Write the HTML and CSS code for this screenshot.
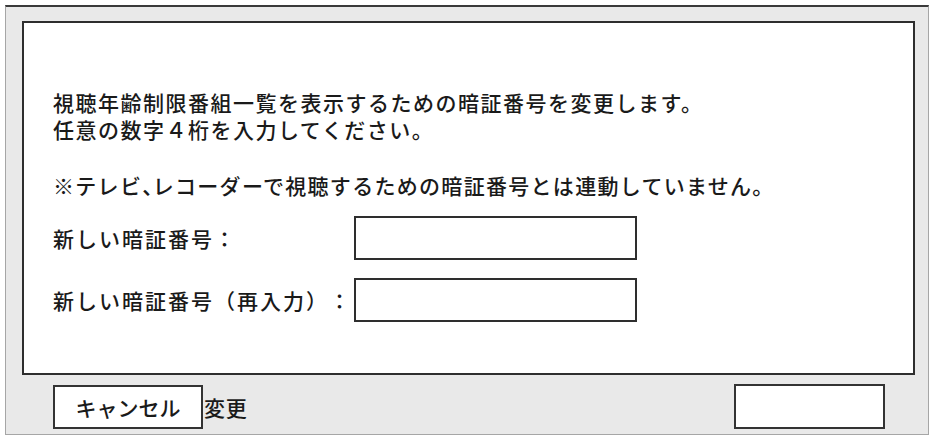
FILE: index.html
```html
<!DOCTYPE html>
<html lang="ja">
<head>
    <meta charset="UTF-8">
    <meta name="viewport" content="width=device-width, initial-scale=1.0">
    <title>暗証番号変更</title>
    <link rel="stylesheet" href="styles.css">
</head>
<body>

    <div class="dialog">
        <form class="panel" id="pin-form">
            <p class="lead">
                視聴年齢制限番組一覧を表示するための暗証番号を変更します。<br>
                任意の数字４桁を入力してください。
            </p>
            <p class="note">※テレビ<span class="comma">、</span>レコーダーで視聴するための暗証番号とは連動していません。</p>

            <div class="field">
                <label for="pin">新しい暗証番号：</label>
                <input type="password" id="pin" maxlength="4" inputmode="numeric">
            </div>
            <div class="field">
                <label for="pin-confirm">新しい暗証番号（再入力）：</label>
                <input type="password" id="pin-confirm" maxlength="4" inputmode="numeric">
            </div>
        </form>

        <div class="actions">
            <button type="button" class="btn">キャンセル</button>
            <span class="submit-label">変更</span>
            <span class="blank-box"></span>
        </div>
    </div>

</body>
</html>
```

FILE: styles.css
```css
body { margin: 0; background: #fff; font-family: "Noto Sans CJK JP", "Noto Sans", sans-serif; color: #1a1a1a; }

.dialog { width: 924px; height: 430px; box-sizing: border-box; margin: 5px; background: #e9e9e9; border: 1px solid #a6a6a6; border-top: 2px solid #3a3a3a; padding: 14px 13px 0 16px; display: flex; flex-direction: column; }

.panel { height: 354px; box-sizing: border-box; margin: 0; background: #fff; border: 2px solid #2e2e2e; padding: 66px 0 0 29px; font-size: 21px; font-weight: 500; letter-spacing: 1.5px; text-spacing-trim: space-all; }
.panel p { margin: 0; line-height: 27px; }
.note { margin-top: 29px !important; letter-spacing: 1.3px; }
/* 読点は半角幅で詰める */
.comma { font-feature-settings: "halt"; letter-spacing: 0; }

.field { display: flex; align-items: center; margin-top: 18px; }
.note + .field { margin-top: 17px; }
.field label { flex: none; width: 301px; line-height: 27px; letter-spacing: 2px; white-space: nowrap; }
.field input { width: 283px; height: 44px; box-sizing: border-box; border: 2px solid #2e2e2e; margin: 0; padding: 0 8px; font: inherit; background: #fff; }

.actions { display: flex; align-items: center; padding: 9px 30px 0 31px; font-size: 21px; font-weight: 500; letter-spacing: 0.8px; }
.btn { width: 150px; height: 44px; box-sizing: border-box; border: 2px solid #333; background: #fff; font: inherit; color: inherit; padding: 0; cursor: pointer; }
.submit-label { margin-left: 1px; }
.blank-box { margin-left: auto; width: 151px; height: 45px; box-sizing: border-box; border: 2px solid #333; background: #fff; }
```
